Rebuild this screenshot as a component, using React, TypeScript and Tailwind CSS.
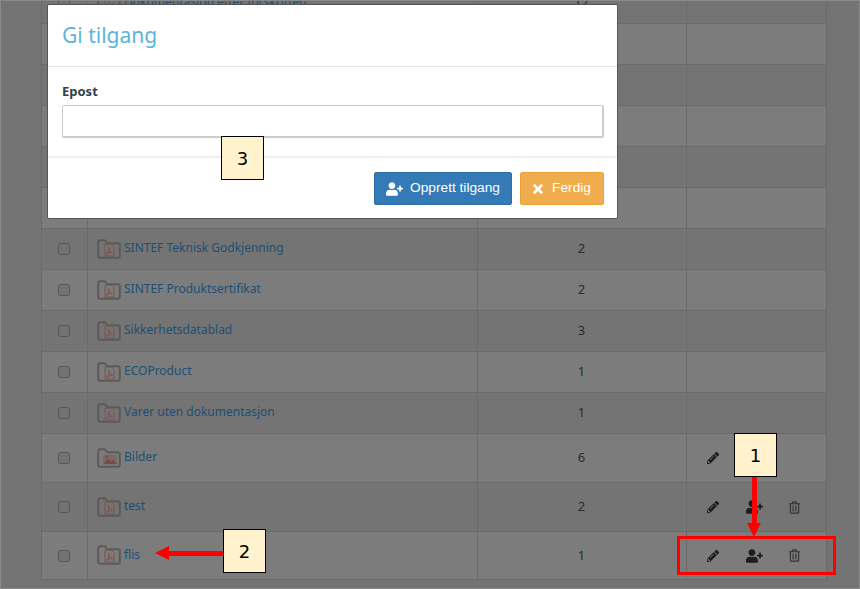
import { FaPencilAlt, FaRegTrashAlt, FaUserPlus } from "react-icons/fa";
import { ImCross } from "react-icons/im";

type Row = {
    name: string;
    count: string;
    kind?: "pdf" | "image";
    actions?: "edit" | "all";
    height: string;
};

const rows: Row[] = [
    { name: "Dokumentasjon etter forskriften", count: "17", height: "h-[41px]" },
    { name: "", count: "", height: "h-[41px]" },
    { name: "", count: "", height: "h-[41px]" },
    { name: "", count: "", height: "h-[41px]" },
    { name: "", count: "", height: "h-[41px]" },
    { name: "", count: "", height: "h-[41px]" },
    { name: "SINTEF Teknisk Godkjenning", count: "2", height: "h-[41px]" },
    { name: "SINTEF Produktsertifikat", count: "2", height: "h-[41px]" },
    { name: "Sikkerhetsdatablad", count: "3", height: "h-[41px]" },
    { name: "ECOProduct", count: "1", height: "h-[41px]" },
    { name: "Varer uten dokumentasjon", count: "1", height: "h-[41px]" },
    { name: "Bilder", count: "6", kind: "image", actions: "edit", height: "h-[49px]" },
    { name: "test", count: "2", actions: "all", height: "h-[49px]" },
    { name: "flis", count: "1", actions: "all", height: "h-[47px]" },
];

const FolderIcon = ({ kind = "pdf" }: { kind?: "pdf" | "image" }) => (
    <svg width="24" height="20" viewBox="0 0 24 20" fill="none" className="shrink-0 -mt-[1px]">
        <path d="M1.2 16.8V3.2C1.2 2 2 1.2 3.2 1.2H7.5C9 1.2 9.2 4.2 10.8 4.2H20.8C22 4.2 22.8 5 22.8 6.2V16.8C22.8 18 22 18.8 20.8 18.8H3.2C2 18.8 1.2 18 1.2 16.8Z" stroke="#5a5a5a" strokeWidth="2" />
        {kind === "pdf" ? (
            <g stroke="#7d5250" strokeWidth="1" fill="none">
                <path d="M8 5H14.5L17 7.5V17H8Z" />
                <path d="M9.5 15.5C11.5 13.5 12 10.5 11.7 8.5C12.5 11.5 13.5 13 15.8 13.5C13.5 13.3 11.5 14 9.5 15.5Z" />
            </g>
        ) : (
            <g>
                <rect x="6" y="6.5" width="14" height="10" fill="#7d4a48" opacity="0.35" />
                <path d="M6.5 16L11 10.5L14 13.5L16 11.5L20 16Z" fill="#7d4a48" />
                <circle cx="9.5" cy="8.8" r="1.2" fill="#7d4a48" />
            </g>
        )}
    </svg>
);

const Actions = ({ type }: { type?: "edit" | "all" }) => {
    if (!type) return null;
    return (
        <div className="flex items-center pl-[20px]">
            <FaPencilAlt className="w-[12px] h-[12px] text-[#1c1c1c]" />
            <div className="w-[27px]" />
            {type === "all" && (
                <>
                    <FaUserPlus className="w-[17px] h-[14px] text-[#1c1c1c]" />
                    <div className="w-[26px]" />
                    <FaRegTrashAlt className="w-[11px] h-[13px] text-[#333333]" />
                </>
            )}
        </div>
    );
};

const Note = ({ label, className }: { label: string; className: string }) => (
    <div className={`absolute w-[43px] h-[44px] bg-[#fff2cc] border border-black flex items-center justify-center text-[18px] text-black font-['DejaVu_Sans',sans-serif] ${className}`}>
        {label}
    </div>
);

const App = () => {
    return (
        <div className="relative w-[860px] h-[589px] overflow-hidden bg-[#747474] font-['Noto_Sans',sans-serif]">
            <div className="w-[786px] ml-[41px] -mt-[17px] border-x border-b border-[#6a6a6a]">
                {rows.map((row, i) => (
                    <div
                        key={i}
                        className={`flex border-b border-[#6b6b6b] last:border-b-0 box-border ${row.height} ${i % 2 === 0 ? "bg-[#747474]" : "bg-[#7c7c7c]"}`}
                    >
                        <div className="w-[46px] flex items-center justify-center pr-[1px] border-r border-[#6b6b6b]">
                            {row.name && <div className="w-[12px] h-[12px] rounded-[3px] border border-[#555555] bg-[#737373]" />}
                        </div>
                        <div className="w-[390px] flex items-center gap-[3px] pl-[9px] border-r border-[#6b6b6b]">
                            {row.name && <FolderIcon kind={row.kind} />}
                            {row.name && <span className="text-[12px] text-[#1d4f74] -mt-[2px]">{row.name}</span>}
                        </div>
                        <div className="w-[209px] flex items-center justify-center border-r border-[#6b6b6b] text-[13px] text-[#2a2a2a] pr-[1px]">
                            {row.count}
                        </div>
                        <div className="flex-1 flex items-center">
                            <Actions type={row.actions} />
                        </div>
                    </div>
                ))}
            </div>

            {/* modal */}
            <div className="absolute left-[47px] top-[4px] w-[571px] h-[215px] bg-white border border-[#555555] rounded-[2px] flex flex-col">
                <div className="h-[62px] pl-[14px] pr-[13px] flex items-center border-b border-[#e5e5e5]">
                    <h1 className="text-[21px] text-[#5bb4dc]">Gi tilgang</h1>
                </div>
                <div className="h-[91px] pl-[14px] pr-[13px] pt-[14px] border-b-2 border-[#eeeeee]">
                    <label className="block text-[13px] font-bold text-[#333f4d] leading-[20px] mb-[4px]">Epost</label>
                    <input className="block w-full h-[33px] border border-[#cccccc] border-b-2 border-r-2 rounded-[2px] bg-white" />
                </div>
                <div className="flex-1 flex items-start justify-end gap-[8px] pt-[14px] pr-[13px]">
                    <button className="w-[138px] h-[33px] flex items-center justify-center gap-[7px] bg-[#337ab7] border border-[#2e6da4] rounded-[2px] text-white text-[13.7px] font-['Liberation_Sans',sans-serif]">
                        <FaUserPlus className="w-[17px] h-[14px]" />
                        Opprett tilgang
                    </button>
                    <button className="w-[84px] h-[33px] flex items-center justify-center gap-[9px] bg-[#f0ad4e] border border-[#eea236] rounded-[2px] text-white text-[13.7px] font-['Liberation_Sans',sans-serif]">
                        <ImCross className="w-[10px] h-[10px]" />
                        Ferdig
                    </button>
                </div>
            </div>

            {/* annotations */}
            <Note label="3" className="left-[221px] top-[136px]" />
            <Note label="2" className="left-[223px] top-[529px]" />
            <Note label="1" className="left-[734px] top-[433px]" />

            <div className="absolute left-[169px] top-[551px] w-[54px] h-[5px] bg-[#ff0000]" />
            <div className="absolute left-[155px] top-[546px] w-0 h-0 border-y-[7.5px] border-y-transparent border-r-[14px] border-r-[#ff0000]" />

            <div className="absolute left-[752px] top-[477px] w-[5px] h-[47px] bg-[#ff0000]" />
            <div className="absolute left-[747px] top-[523px] w-0 h-0 border-x-[7.5px] border-x-transparent border-t-[14px] border-t-[#ff0000]" />

            <div className="absolute left-[677px] top-[536px] w-[159px] h-[39px] border-[3px] border-[#ff0000]" />

            {/* window edge of the screenshot */}
            <div className="absolute inset-0 border border-[#8a8a8a] pointer-events-none" />
        </div>
    );
};

export default App;
